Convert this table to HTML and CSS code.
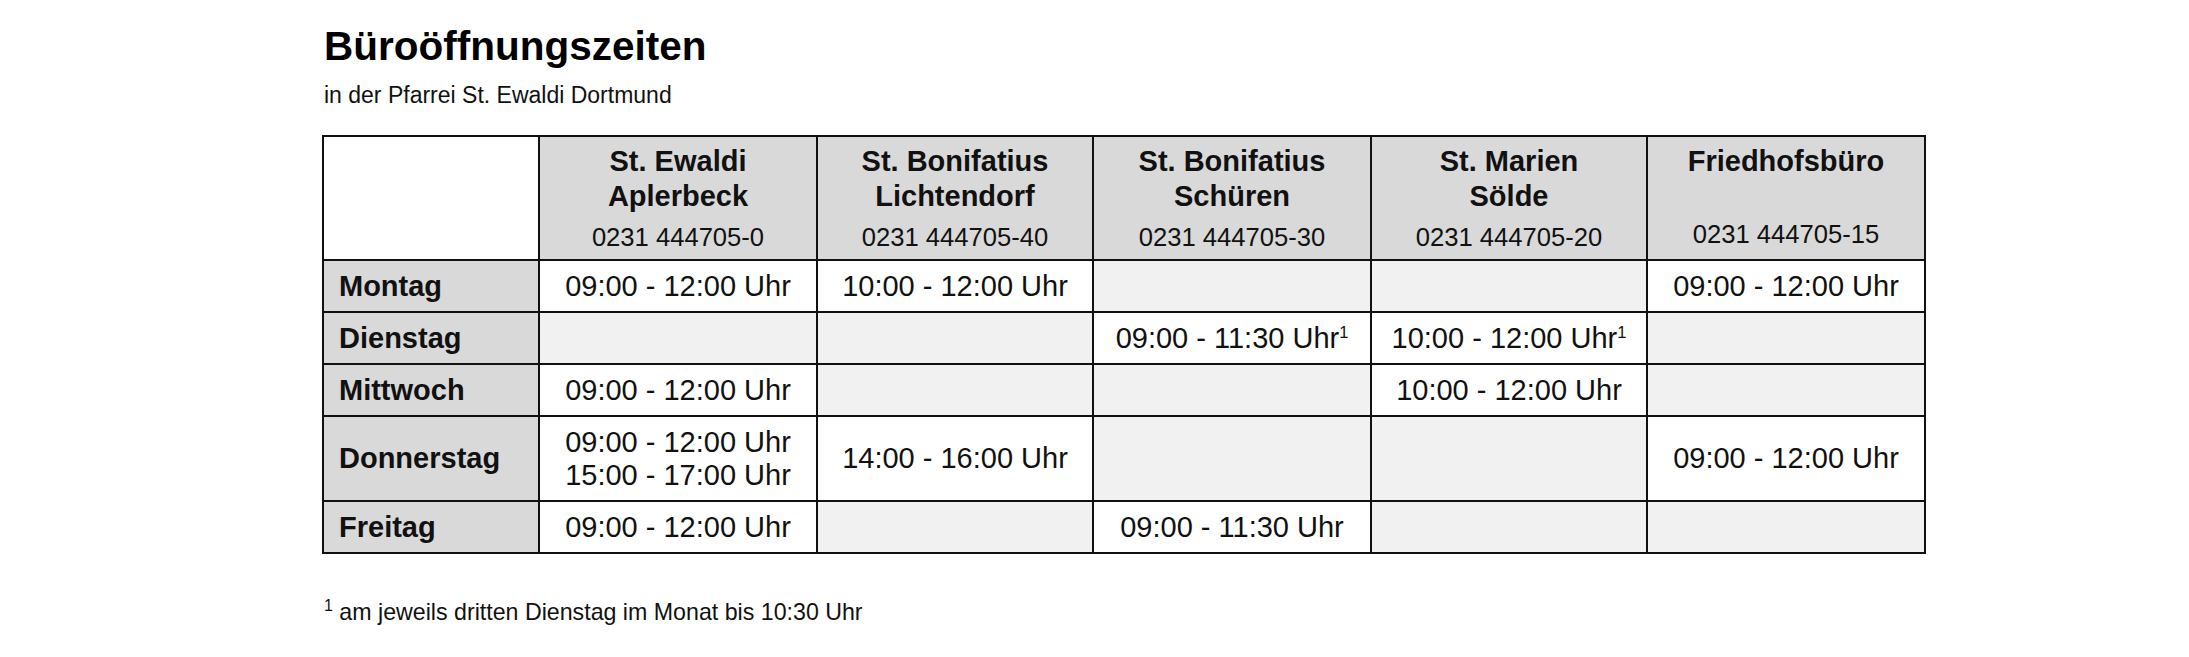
FILE: index.html
```html
<!DOCTYPE html>
<html lang="de">
<head>
<meta charset="utf-8">
<title>Büroöffnungszeiten</title>
<link rel="stylesheet" href="styles.css">
</head>
<body>
<main class="page">
  <h1 class="title">Büroöffnungszeiten</h1>
  <p class="subtitle">in der Pfarrei St. Ewaldi Dortmund</p>

  <table class="hours">
    <colgroup>
      <col class="col-day">
      <col class="col-a">
      <col class="col-b">
      <col class="col-a">
      <col class="col-b">
      <col class="col-a">
    </colgroup>
    <thead>
      <tr>
        <th class="corner"></th>
        <th class="office"><div class="office-name">St. Ewaldi<br>Aplerbeck</div><div class="phone">0231 444705-0</div></th>
        <th class="office"><div class="office-name">St. Bonifatius<br>Lichtendorf</div><div class="phone">0231 444705-40</div></th>
        <th class="office"><div class="office-name">St. Bonifatius<br>Schüren</div><div class="phone">0231 444705-30</div></th>
        <th class="office"><div class="office-name">St. Marien<br>Sölde</div><div class="phone">0231 444705-20</div></th>
        <th class="office"><div class="office-name">Friedhofsbüro</div><div class="phone phone--tight">0231 444705-15</div></th>
      </tr>
    </thead>
    <tbody>
      <tr>
        <th class="day">Montag</th>
        <td class="open">09:00 - 12:00 Uhr</td>
        <td class="open">10:00 - 12:00 Uhr</td>
        <td class="closed"></td>
        <td class="closed"></td>
        <td class="open">09:00 - 12:00 Uhr</td>
      </tr>
      <tr>
        <th class="day">Dienstag</th>
        <td class="closed"></td>
        <td class="closed"></td>
        <td class="open">09:00 - 11:30 Uhr<sup class="mark">1</sup></td>
        <td class="open">10:00 - 12:00 Uhr<sup class="mark">1</sup></td>
        <td class="closed"></td>
      </tr>
      <tr>
        <th class="day">Mittwoch</th>
        <td class="open">09:00 - 12:00 Uhr</td>
        <td class="closed"></td>
        <td class="closed"></td>
        <td class="open">10:00 - 12:00 Uhr</td>
        <td class="closed"></td>
      </tr>
      <tr>
        <th class="day">Donnerstag</th>
        <td class="open">09:00 - 12:00 Uhr<br>15:00 - 17:00 Uhr</td>
        <td class="open">14:00 - 16:00 Uhr</td>
        <td class="closed"></td>
        <td class="closed"></td>
        <td class="open">09:00 - 12:00 Uhr</td>
      </tr>
      <tr>
        <th class="day">Freitag</th>
        <td class="open">09:00 - 12:00 Uhr</td>
        <td class="closed"></td>
        <td class="open">09:00 - 11:30 Uhr</td>
        <td class="closed"></td>
        <td class="closed"></td>
      </tr>
    </tbody>
  </table>

  <p class="footnote"><sup class="footnote-mark">1</sup> am jeweils dritten Dienstag im Monat bis 10:30 Uhr</p>
</main>
</body>
</html>
```

FILE: styles.css
```css
html, body {
  margin: 0;
  padding: 0;
  background: #ffffff;
}

body {
  font-family: "Liberation Sans", Arial, Helvetica, sans-serif;
  color: #111111;
}

.page {
  padding: 23px 0 0 322px;
}

.title {
  margin: 0 0 0 2px;
  font-size: 40.5px;
  line-height: 46px;
  font-weight: bold;
  color: #000000;
}

.subtitle {
  margin: 13px 0 0 2px;
  font-size: 23px;
  line-height: 26px;
}

.hours {
  margin-top: 27px;
  width: 1604px;
  table-layout: fixed;
  border-collapse: separate;
  border-spacing: 0;
  border-top: 2px solid #111111;
  border-left: 2px solid #111111;
  font-size: 29px;
}

.col-day { width: 216px; }
.col-a { width: 278px; }
.col-b { width: 276px; }

.hours th,
.hours td {
  border-right: 2px solid #111111;
  border-bottom: 2px solid #111111;
  padding: 0;
}

.corner {
  background: #ffffff;
}

.office {
  background: #d9d9d9;
  vertical-align: top;
  text-align: center;
  font-weight: bold;
  padding: 7px 6px 7px 6px !important;
}

.office-name {
  line-height: 35px;
  min-height: 70px;
}

.phone {
  margin-top: 8px;
  font-weight: normal;
  font-size: 25.6px;
  line-height: 30px;
}

.phone--tight {
  margin-top: 5px;
}

.day {
  background: #d9d9d9;
  text-align: left;
  font-weight: bold;
  line-height: 33px;
  padding: 8.5px 6px 8.5px 15px !important;
}

.open {
  background: #ffffff;
  text-align: center;
  line-height: 33px;
  padding: 8.5px 4px !important;
}

.closed {
  background: #f1f1f1;
}

.mark {
  font-size: 16.5px;
  line-height: 0;
  vertical-align: 10px;
}

.footnote {
  margin: 45px 0 0 2px;
  font-size: 23.2px;
  line-height: 26px;
}

.footnote-mark {
  font-size: 16px;
  line-height: 0;
  vertical-align: 9px;
}
```
